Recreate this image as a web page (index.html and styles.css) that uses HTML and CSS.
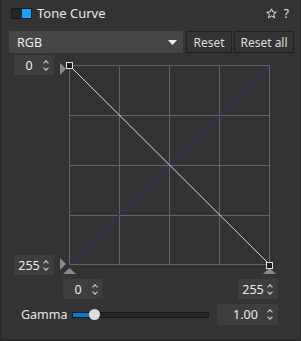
FILE: index.html
```html
<!DOCTYPE html>
<html lang="en">
<head>
    <meta charset="UTF-8">
    <meta name="viewport" content="width=device-width, initial-scale=1.0">
    <title>Tone Curve</title>
    <link rel="stylesheet" href="styles.css">
</head>
<body>

<div class="panel">
    <div class="header">
        <span class="toggle"><span class="toggle-on"></span></span>
        <span class="title">Tone Curve</span>
        <span class="spacer"></span>
        <svg class="star" width="11" height="11" viewBox="0 0 11 11">
            <path d="M5.5 0.8 L6.9 4 L10.3 4.2 L7.7 6.4 L8.5 9.8 L5.5 8 L2.5 9.8 L3.3 6.4 L0.7 4.2 L4.1 4 Z" fill="none" stroke="#e6e6e6" stroke-width="1"/>
        </svg>
        <span class="help">?</span>
    </div>

    <div class="toolbar">
        <div class="select">
            <span>RGB</span>
            <svg width="9" height="5" viewBox="0 0 9 5"><path d="M0 0 H9 L4.5 5 Z" fill="#f0f0f0"/></svg>
        </div>
        <button class="btn btn-reset">Reset</button>
        <button class="btn btn-reset-all">Reset all</button>
    </div>

    <div class="curve-area">
        <div class="side">
            <div class="num"><span class="num-value">0</span><span class="spin"></span></div>
            <div class="num"><span class="num-value">255</span><span class="spin"></span></div>
        </div>
        <svg class="graph" width="222" height="221" viewBox="0 0 222 221">
            <g stroke="#646464" stroke-width="1">
                <path d="M11.5 10 V210 M61.5 10 V210 M111.5 10 V210 M161.5 10 V210 M211.5 10 V210"/>
                <path d="M11 10.5 H211 M11 60.5 H211 M11 110.5 H211 M11 160.5 H211 M11 209.5 H211"/>
            </g>
            <line x1="11.5" y1="209.5" x2="211.5" y2="10.5" stroke="#2a2ab8" stroke-width="1"/>
            <line x1="11.5" y1="10.5" x2="211.5" y2="209.5" stroke="#d8d8d8" stroke-width="1"/>
            <path d="M2 8 L8 14 L2 20 Z" fill="#8a8a8a"/>
            <path d="M2 203 L8 209 L2 215 Z" fill="#8a8a8a"/>
            <path d="M5 219 L11.5 213 L18 219 Z" fill="#8a8a8a"/>
            <path d="M205 219 L211.5 213 L218 219 Z" fill="#8a8a8a"/>
            <rect x="8.5" y="7.5" width="6" height="6" fill="#1c1c1c" stroke="#e0e0e0" stroke-width="1"/>
            <rect x="208.5" y="207.5" width="6" height="6" fill="#1c1c1c" stroke="#e0e0e0" stroke-width="1"/>
        </svg>
    </div>

    <div class="range-row">
        <div class="num"><span class="num-value">0</span><span class="spin"></span></div>
        <div class="num"><span class="num-value">255</span><span class="spin"></span></div>
    </div>

    <div class="gamma-row">
        <span class="gamma-label">Gamma</span>
        <div class="slider">
            <div class="slider-fill"></div>
            <div class="slider-thumb"></div>
        </div>
        <div class="num num-wide"><span class="num-value">1.00</span><span class="spin"></span></div>
    </div>
</div>

</body>
</html>
```

FILE: styles.css
```css
body {
    margin: 0;
    background: #2b2b2b;
    font-family: 'Noto Sans', 'Open Sans', sans-serif;
    font-size: 12px;
    color: #e2e2e2;
}
.panel {
    width: 301px;
    height: 341px;
    box-sizing: border-box;
    background: #333333;
    border-left: 1px solid #262626;
    border-right: 1px solid #2a2a2a;
    border-bottom: 2px solid #292929;
}
.header {
    display: flex;
    align-items: center;
    height: 26px;
    padding: 0 11px 0 10px;
}
.toggle {
    display: flex;
    justify-content: flex-end;
    width: 19px;
    height: 9px;
    background: #262626;
    border: 1px solid #1a1a1a;
}
.toggle-on {
    width: 9px;
    height: 9px;
    background: #17a2ff;
}
.title {
    margin-left: 5px;
    font-size: 13px;
    color: #e8e8e8;
}
.spacer {
    flex: 1;
}
.star {
    margin-right: 7px;
}
.help {
    font-size: 12px;
    color: #e6e6e6;
}
.toolbar {
    display: flex;
    margin: 5px 0 0 8px;
    height: 22px;
}
.select {
    display: flex;
    align-items: center;
    justify-content: space-between;
    width: 174px;
    padding: 0 5px 0 8px;
    box-sizing: border-box;
    background: #464646;
    font-size: 12.5px;
    color: #ececec;
}
.select svg {
    margin-right: 1px;
}
.btn {
    height: 22px;
    margin: 0;
    padding: 0;
    background: #333333;
    border: 1px solid #1f1f1f;
    color: #dedede;
    font-family: inherit;
    font-size: 12px;
}
.btn-reset {
    width: 46px;
    margin-left: 3px;
}
.btn-reset-all {
    width: 60px;
    margin-left: 2px;
}
.curve-area {
    display: flex;
    margin: 2px 0 0 13px;
}
.side {
    display: flex;
    flex-direction: column;
    justify-content: space-between;
    height: 220px;
    margin-right: 4px;
}
.graph {
    display: block;
}
.num {
    display: flex;
    align-items: center;
    width: 40px;
    height: 20px;
    background: #3e3e3e;
    box-sizing: border-box;
}
.num-value {
    flex: 1;
    text-align: center;
    font-size: 12.5px;
    color: #ececec;
    padding-left: 2px;
}
.spin {
    position: relative;
    width: 8px;
    height: 13px;
    margin-right: 4px;
}
.spin::before, .spin::after {
    content: "";
    position: absolute;
    left: 2px;
    width: 3px;
    height: 3px;
    border-left: 1px solid #d4d4d4;
    border-top: 1px solid #d4d4d4;
}
.spin::before {
    top: 2px;
    transform: rotate(45deg);
}
.spin::after {
    bottom: 2px;
    transform: rotate(225deg);
}
.range-row {
    display: flex;
    justify-content: space-between;
    width: 215px;
    margin: 3px 0 0 62px;
}
.gamma-row {
    display: flex;
    align-items: center;
    height: 21px;
    margin: 5px 0 0 20px;
}
.gamma-label {
    width: 51px;
    font-size: 12.5px;
    color: #e6e6e6;
}
.slider {
    position: relative;
    width: 135px;
    height: 4px;
    background: #262626;
    border: 1px solid #1a1a1a;
    margin-right: 8px;
}
.slider-fill {
    width: 21px;
    height: 4px;
    background: #0b78d6;
}
.slider-thumb {
    position: absolute;
    left: 16px;
    top: -4px;
    width: 11px;
    height: 11px;
    border-radius: 50%;
    background: #dedede;
}
.num-wide {
    width: 61px;
    height: 21px;
}
.num-wide .num-value {
    padding-left: 8px;
}
```
